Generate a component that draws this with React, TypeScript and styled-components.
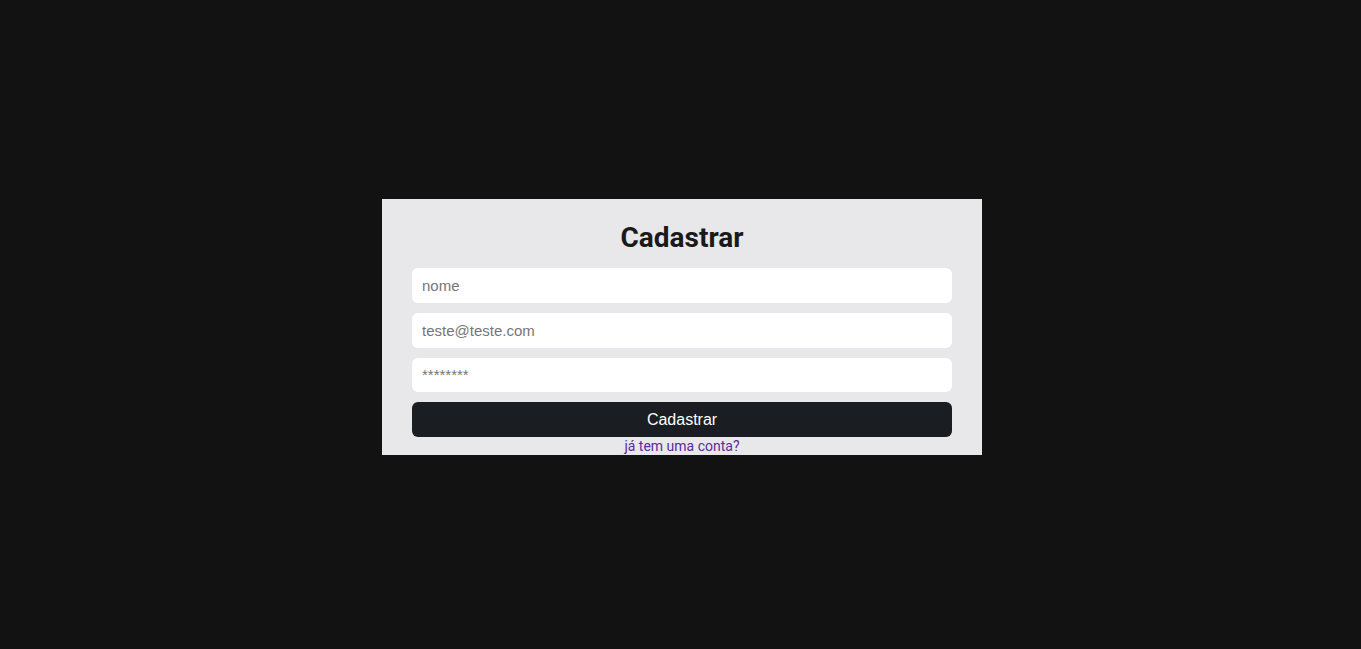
import React from "react";
import styled, { createGlobalStyle } from "styled-components";

const Global = createGlobalStyle`
  html, body { margin: 0; padding: 0; background: #121212; }
  * { box-sizing: border-box; }
`;

const Page = styled.div`
  min-height: 100vh;
  padding: 5px 0 0 3px;
  display: flex;
  align-items: center;
  justify-content: center;
  background: #121212;
`;

const Card = styled.form`
  width: 600px;
  height: 256px;
  background: #e8e8ea;
  padding: 22px 30px 0;
  display: flex;
  flex-direction: column;
  align-items: stretch;
`;

const Title = styled.h1`
  margin: 0 0 14px;
  font-family: Roboto, "Liberation Sans", sans-serif;
  font-weight: 700;
  font-size: 28px;
  line-height: 33px;
  text-align: center;
  color: #1a1a1a;
`;

const Input = styled.input`
  height: 35px;
  border: none;
  border-radius: 6px;
  background: #ffffff;
  padding: 0 10px;
  margin-bottom: 10px;
  font-family: "Liberation Sans", Arial, sans-serif;
  font-size: 15px;
  color: #222;
  outline: none;
  &::placeholder { color: #767676; }
`;

const Button = styled.button`
  height: 35px;
  border: none;
  border-radius: 6px;
  background: #1a1d21;
  color: #ffffff;
  font-family: "Liberation Sans", Arial, sans-serif;
  font-size: 16px;
  cursor: pointer;
`;

const LinkText = styled.a`
  display: block;
  margin-top: 1px;
  text-align: center;
  font-family: Roboto, "Liberation Sans", sans-serif;
  font-size: 14px;
  line-height: 17px;
  color: #5a2a9a;
  text-decoration: none;
`;

export default function App() {
  return (
    <>
      <Global />
      <Page>
        <Card onSubmit={(e) => e.preventDefault()}>
          <Title>Cadastrar</Title>
          <Input type="text" placeholder="nome" />
          <Input type="email" placeholder="teste@teste.com" />
          <Input type="password" placeholder="********" />
          <Button type="submit">Cadastrar</Button>
          <LinkText href="#">já tem uma conta?</LinkText>
        </Card>
      </Page>
    </>
  );
}
